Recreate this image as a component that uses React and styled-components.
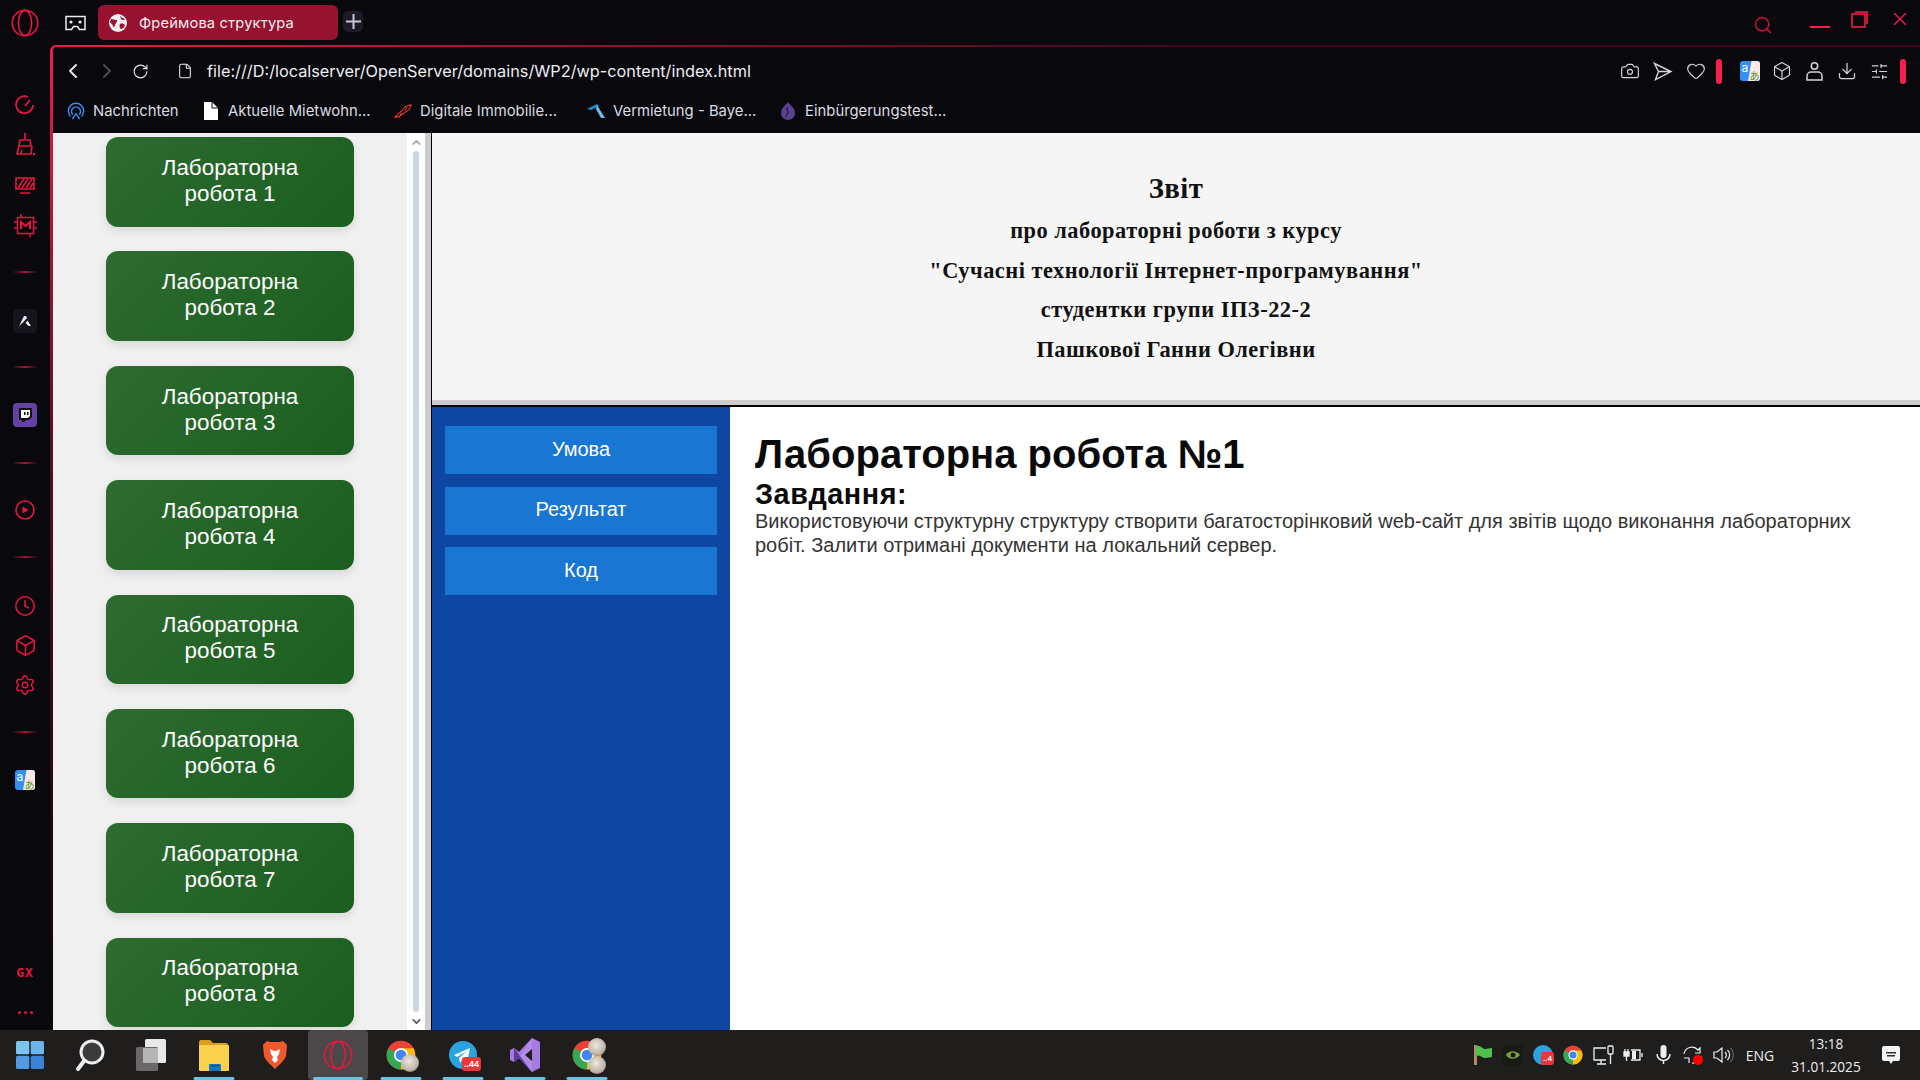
import React from 'react';
import styled, { createGlobalStyle } from 'styled-components';
import { Camera, Heart, Box, Download, SlidersHorizontal, ChevronLeft, ChevronRight, RotateCw, File, Search, X, Clock, Settings, ChevronUp, ChevronDown } from 'lucide-react';

const Global = createGlobalStyle`
  html, body { margin: 0; padding: 0; background: #08080d; }
  #root { width: 1920px; height: 1080px; }
  * { box-sizing: border-box; }
`;
const Screen = styled.div`width:1920px;height:1080px;display:flex;flex-direction:column;overflow:hidden;background:#08080d;`;
const Top = styled.div`height:45px;flex:none;display:flex;align-items:flex-start;position:relative;`;
const LogoSlot = styled.div`width:50px;height:45px;display:flex;align-items:center;justify-content:center;`;
const GameSlot = styled.div`width:48px;height:45px;padding-left:3px;display:flex;align-items:center;justify-content:center;`;
const Tab = styled.div`margin-top:5px;width:240px;height:35px;background:#96122f;border-radius:6px;display:flex;align-items:center;padding-left:11px;gap:12px;color:#eee;font:14.7px Inter,sans-serif;letter-spacing:.15px;`;
const NewTab = styled.div`margin:11px 0 0 5px;width:20px;height:21px;border-radius:5px;background:#1c1c28;display:flex;align-items:center;justify-content:center;`;
const TopRight = styled.div`margin-left:auto;height:45px;display:flex;align-items:center;color:#fa1e4e;`;
const WinBtn = styled.div`width:${p=>p.$w}px;margin-top:${p=>p.$mt||0}px;display:flex;justify-content:center;align-items:center;`;
const Body = styled.div`flex:1;min-height:0;display:flex;`;
const Rail = styled.div`width:50px;flex:none;display:flex;flex-direction:column;align-items:center;padding:40px 0 0;color:#e8163f;`;
const RailItem = styled.div`height:${p=>p.$h||40}px;flex:none;display:flex;align-items:center;justify-content:center;margin-top:${p=>p.$mt||0}px;`;
const Sep = styled.div`width:26px;height:2px;flex:none;margin-top:${p=>p.$mt}px;background:linear-gradient(90deg,transparent,#a8143a,transparent);`;
const Spacer = styled.div`flex:1;`;
const GxText = styled.div`font:bold 13px "DejaVu Sans Mono",monospace;color:#e8163f;letter-spacing:1px;`;
const Dots = styled.div`display:flex;gap:3px;`;
const Dot = styled.span`width:3px;height:3px;border-radius:50%;background:#e8163f;`;
const Panel = styled.div`flex:1;min-width:0;display:flex;flex-direction:column;margin-left:0;border-top:2px solid transparent;border-left:3px solid transparent;border-top-left-radius:6px;
  background:linear-gradient(#08080d,#08080d) padding-box,linear-gradient(90deg,#f01c4a 0%,#9d1534 25%,#3d0c1c 60%,#3d0c1c 100%) border-box;position:relative;`;
const PanelEdge = styled.div`position:absolute;left:-3px;top:4px;bottom:0;width:3px;background:linear-gradient(#f01c4a,#5a0f22 40%,#220810 80%,#08080d);`;
const Toolbar = styled.div`height:47px;flex:none;display:flex;align-items:center;padding-top:1px;`;
const NavBtn = styled.div`width:${p=>p.$w||33}px;padding-left:${p=>p.$pl||0}px;display:flex;justify-content:center;color:${p=>p.$dim?'#4a4a50':'#e6e6ea'};`;
const Url = styled.div`color:#eeeef2;font:16.3px Inter,sans-serif;white-space:nowrap;`;
const Tools = styled.div`margin-left:auto;display:flex;align-items:center;color:#d4d4da;padding-right:10px;`;
const ToolSlot = styled.div`width:${p=>p.$w||33}px;margin-left:${p=>p.$ml||0}px;display:flex;justify-content:center;align-items:center;`;
const RedBar = styled.div`width:6px;height:25px;border-radius:3px;background:#fa1e4e;`;
const Bookmarks = styled.div`height:39px;flex:none;display:flex;align-items:center;padding:0 0 6px 14px;`;
const Bookmark = styled.div`width:${p=>p.$w}px;display:flex;align-items:center;gap:8px;color:#dcdce2;font:14.85px Inter,sans-serif;white-space:nowrap;`;
const BmIcon = styled.span`width:18px;height:18px;flex:none;display:flex;align-items:center;justify-content:center;`;
const Frames = styled.div`flex:1;min-height:0;display:flex;`;
const LeftFrame = styled.div`width:372px;flex:none;display:flex;background:#f0f0f0;overflow:hidden;`;
const LabList = styled.div`flex:1;display:flex;flex-direction:column;align-items:center;padding-top:4px;gap:24.9px;`;
const LabButton = styled.div`width:248px;height:89.5px;flex:none;border-radius:12px;background:linear-gradient(135deg,#2e6b30,#1b5e20);box-shadow:0 4px 10px rgba(0,0,0,.1);color:#fff;
  display:flex;align-items:center;justify-content:center;text-align:center;font:22.4px/26px "Liberation Sans",sans-serif;padding-bottom:2px;`;
const Scroll = styled.div`width:18px;flex:none;background:#fff;display:flex;flex-direction:column;align-items:center;color:#6a6a6a;`;
const Arrow = styled.div`height:18px;flex:none;display:flex;align-items:center;justify-content:center;`;
const Thumb = styled.div`width:6px;flex:1;background:#cdd7e1;border-radius:3px;`;
const VDivider = styled.div`width:7px;flex:none;background:#ccc;border-right:1px solid #000;`;
const RightFrames = styled.div`flex:1;min-width:0;display:flex;flex-direction:column;`;
const Header = styled.header`height:267px;flex:none;background:#f5f5f5;display:flex;flex-direction:column;align-items:center;padding-top:33px;font-family:"Liberation Serif",serif;font-weight:bold;color:#111;`;
const Title = styled.div`font-size:28.8px;line-height:45px;letter-spacing:.4px;`;
const SubLine = styled.div`font-size:22.4px;line-height:39.7px;letter-spacing:.5px;`;
const HDivider = styled.div`height:7px;flex:none;background:#ccc;border-bottom:2px solid #000;`;
const Lower = styled.div`flex:1;min-height:0;display:flex;background:#fff;`;
const Side = styled.nav`width:298px;flex:none;background:#0d47a1;padding:19px 13px 0;display:flex;flex-direction:column;gap:12.5px;`;
const SideBtn = styled.div`height:48px;flex:none;background:#1976d2;color:#fff;display:flex;align-items:center;justify-content:center;font:20px "Liberation Sans",sans-serif;padding-bottom:2px;`;
const Content = styled.main`flex:1;padding:24px 25px 0;color:#111;font-family:"Liberation Sans",sans-serif;`;
const H1 = styled.h1`margin:0;font-size:40px;line-height:47px;color:#0a0a0a;`;
const H2 = styled.h2`margin:0;font-size:28.8px;line-height:32px;letter-spacing:.55px;color:#0a0a0a;`;
const P = styled.p`margin:0;font-size:20px;line-height:23.5px;color:#333;`;
const Taskbar = styled.div`height:50px;flex:none;background:#201d1d;display:flex;align-items:stretch;color:#fff;`;
const AppSlot = styled.div`width:${p=>p.$w||61}px;margin-right:${p=>p.$mr||0}px;padding-right:${p=>p.$pr||0}px;position:relative;display:flex;align-items:center;justify-content:center;background:${p=>p.$on?'#4a4848':'transparent'};border-radius:4px;`;
const Underline = styled.span`position:absolute;bottom:0;left:50%;transform:translateX(-50%);width:${p=>p.$w||41}px;height:3px;background:#66c3ea;border-radius:2px;`;
const Tray = styled.div`margin-left:auto;display:flex;align-items:center;padding-right:14px;`;
const TrayIcon = styled.div`width:30px;display:flex;justify-content:center;align-items:center;`;
const Eng = styled.div`font:14px "Open Sans",sans-serif;color:#eee;width:44px;text-align:center;`;
const Clocks = styled.div`width:88px;margin:0 6px 0 0;text-align:center;font:13.6px/23px "Open Sans",sans-serif;color:#eee;`;

const OperaLogo = ({s=28,c='#e8163f',w=1.6}) => (
  <svg width={s} height={s} viewBox="0 0 28 28" fill="none" stroke={c} strokeWidth={w}><circle cx="14" cy="14" r="12.8"/><ellipse cx="14" cy="14" rx="6.6" ry="12.6"/></svg>
);
const Translate = ({s=20}) => (
  <svg width={s} height={s} viewBox="0 0 20 20"><rect width="20" height="20" rx="3" fill="#3390f5"/><path d="M11.5 0H17a3 3 0 0 1 3 3v14a3 3 0 0 1-3 3H8z" fill="#fde8e4"/><text x="1.500" y="10.500" fontSize="12" fontFamily="Inter,sans-serif" fill="#fff">a</text><text x="9.500" y="18.500" fontSize="10" fontFamily="'Noto Sans CJK JP',sans-serif" fill="#4b9a32">あ</text></svg>
);
const Chrome = ({s=24}) => (
  <svg width={s} height={s} viewBox="0 0 24 24"><circle cx="12" cy="12" r="11.5" fill="#ea4335"/><path d="M12 12 1.9 6.5A11.5 11.5 0 0 0 12 23.5z" fill="#34a853"/><path d="M12 12V23.5A11.5 11.5 0 0 0 22 6.5H12z" fill="#fbbc05"/><circle cx="12" cy="12" r="5.6" fill="#fff"/><circle cx="12" cy="12" r="4.3" fill="#4285f4"/></svg>
);
const Fluffy = styled.span`position:absolute;right:${p=>p.$r}px;bottom:${p=>p.$b}px;width:18px;height:18px;border-radius:50%;background:radial-gradient(circle at 45% 40%,#efe9de,#bdb5a8 60%,#4a4640);`;
const Rel = styled.span`position:relative;display:flex;`;
const TgBadge = styled.span`position:absolute;right:${p=>p.$small?-1:-4}px;bottom:${p=>p.$small?0:-2}px;background:#e8373a;color:#fff;font:bold ${p=>p.$small?8:9}px "Liberation Sans",sans-serif;padding:2px 2px;border-radius:3px;`;

const labs = [1,2,3,4,5,6,7,8];

export default function App(){
  return (
    <Screen>
      <Global/>
      <Top>
        <LogoSlot><OperaLogo/></LogoSlot>
        <GameSlot>
          <svg width="21" height="16" viewBox="0 0 21 16" fill="none" stroke="#eee" strokeWidth="1.5"><path d="M1 1.5h19v13h-5.5l-2-3h-4l-2 3H1z"/><circle cx="6" cy="7" r="1.6" fill="#eee" stroke="none"/><circle cx="15" cy="7" r="1.6" fill="#eee" stroke="none"/></svg>
        </GameSlot>
        <Tab>
          <svg width="18" height="18" viewBox="0 0 18 18"><circle cx="9" cy="9" r="9" fill="#eee"/><path d="M2 5c2 0 3 1 5 1s1 2 0 3-1 3-2 4-1-2-2-3-2-1-2-2zM11 2c2 1 1 2 3 2l2 2c-2 0-3 0-4-1zM11 10c2-1 4 0 5 1-1 3-3 4-4 4s-2-3-1-5z" fill="#96122f"/></svg>
          Фреймова структура
        </Tab>
        <NewTab>
          <svg width="15" height="15" viewBox="0 0 15 15" stroke="#c8c8d2" strokeWidth="2"><path d="M7.5 0v15M0 7.5h15"/></svg>
        </NewTab>
        <TopRight>
          <WinBtn $w={78} $mt={4}><Search size={20} color="#c8143c" strokeWidth={1.8}/></WinBtn>
          <WinBtn $w={36} $mt={9}><svg width="20" height="4" viewBox="0 0 20 4"><rect y="1" width="20" height="2" fill="#fa1e4e"/></svg></WinBtn>
          <WinBtn $w={42} $mt={-7}><svg width="17" height="17" viewBox="0 0 17 17" fill="none" stroke="#fa1e4e" strokeWidth="1.5"><rect x="1" y="3" width="13" height="13"/><path d="M4 1h12v12"/></svg></WinBtn>
          <WinBtn $w={40} $mt={-7}><X size={22} color="#fa1e4e" strokeWidth={1.4}/></WinBtn>
        </TopRight>
      </Top>
      <Body>
        <Rail>
          <RailItem>
            <svg width="22" height="22" viewBox="0 0 22 22" fill="none" stroke="#e8163f" strokeWidth="1.8"><path d="M19 11a8.5 8.5 0 1 1-5-8M11 12l5-6"/></svg>
          </RailItem>
          <RailItem>
            <svg width="22" height="24" viewBox="0 0 22 24" fill="none" stroke="#e8163f" strokeWidth="1.7"><path d="M11 0v6M6 7h10l1 6H5zM5 13l-2 8h14l1-8M8 17l-1 4"/><circle cx="20" cy="21" r="1.3" fill="#e8163f" stroke="none"/></svg>
          </RailItem>
          <RailItem>
            <svg width="20" height="17" viewBox="0 0 20 17" fill="none" stroke="#e8163f" strokeWidth="1.6"><rect x="1" y="1" width="18" height="11"/><path d="M5 16h10M3 11l6-9M7 11l6-9M11 11l6-9M15 11l3-5"/></svg>
          </RailItem>
          <RailItem>
            <svg width="23" height="23" viewBox="0 0 23 23" fill="none" stroke="#e8163f" strokeWidth="1.5"><rect x="3.5" y="3.5" width="16" height="16"/><path d="M7 15V8l4.500 4L16 8v7" strokeWidth="2"/><path d="M7 0v3M16 20v3M0 8h3M0 14h3M20 8h3M20 14h3"/></svg>
          </RailItem>
          <Sep $mt={26}/>
          <RailItem $h={24} $mt={36}>
            <svg width="24" height="24" viewBox="0 0 24 24"><rect width="24" height="24" rx="4" fill="#14141c"/><path d="M6 17l5-10h2l1 2-3.500 4zM12.500 14l2-2.500L18 17h-2.500z" fill="#e6e6e6"/></svg>
          </RailItem>
          <Sep $mt={33}/>
          <RailItem $h={24} $mt={35}>
            <svg width="24" height="24" viewBox="0 0 24 24"><rect width="24" height="24" rx="4" fill="#6441a5"/><path d="M6 5h13v9l-3 3h-3l-2 2H9v-2H6z" fill="#111"/><path d="M8 7h9v6l-2 2H8z" fill="#fff"/><path d="M11 9h1.500v3H11zM14 9h1.500v3H14z" fill="#111"/></svg>
          </RailItem>
          <Sep $mt={35}/>
          <RailItem $mt={26}>
            <svg width="20" height="20" viewBox="0 0 20 20" fill="none" stroke="#e8163f" strokeWidth="1.6"><circle cx="10" cy="10" r="9"/><path d="M7.500 6.500l6 3.500-6 3.500z" fill="#e8163f" stroke="none"/></svg>
          </RailItem>
          <Sep $mt={26}/>
          <RailItem $mt={28}><Clock size={22} strokeWidth={1.7}/></RailItem>
          <RailItem $h={38}><Box size={23} strokeWidth={1.6}/></RailItem>
          <RailItem $h={42}><Settings size={22} strokeWidth={1.6}/></RailItem>
          <Sep $mt={25}/>
          <RailItem $mt={27}><Translate/></RailItem>
          <Spacer/>
          <RailItem $h={20}><GxText>GX</GxText></RailItem>
          <RailItem $h={20} $mt={20}><Dots><Dot/><Dot/><Dot/></Dots></RailItem>
          <RailItem $h={8}/>
        </Rail>
        <Panel>
          <PanelEdge/>
          <Toolbar>
            <NavBtn $w={40}><ChevronLeft size={24} strokeWidth={2}/></NavBtn>
            <NavBtn $dim $w={28}><ChevronRight size={24} strokeWidth={2}/></NavBtn>
            <NavBtn $w={38}><RotateCw size={17} strokeWidth={1.6}/></NavBtn>
            <NavBtn $w={48} $pl={3}><File size={16} strokeWidth={1.6}/></NavBtn>
            <Url>file:///D:/localserver/OpenServer/domains/WP2/wp-content/index.html</Url>
            <Tools>
              <ToolSlot><Camera size={20} strokeWidth={1.4}/></ToolSlot>
              <ToolSlot><svg width="20" height="19" viewBox="0 0 20 19" fill="none" stroke="#d4d4da" strokeWidth="1.4"><path d="M1.500 1.500 18 9.500 2.500 17.500 5.500 9.500zM5.500 9.500H18"/></svg></ToolSlot>
              <ToolSlot><Heart size={20} strokeWidth={1.4}/></ToolSlot>
              <ToolSlot $w={14}><RedBar/></ToolSlot>
              <ToolSlot $w={32} $ml={8}><Translate/></ToolSlot>
              <ToolSlot $w={32}><Box size={20} strokeWidth={1.4}/></ToolSlot>
              <ToolSlot><svg width="17" height="19" viewBox="0 0 17 19" fill="none" stroke="#d4d4da" strokeWidth="1.5"><circle cx="8.500" cy="4" r="3.200"/><path d="M1 18v-4a4 4 0 0 1 4-4h7a4 4 0 0 1 4 4v4z"/></svg></ToolSlot>
              <ToolSlot $w={32}><Download size={20} strokeWidth={1.5}/></ToolSlot>
              <ToolSlot><SlidersHorizontal size={19} strokeWidth={1.5}/></ToolSlot>
              <ToolSlot $w={14}><RedBar/></ToolSlot>
            </Tools>
          </Toolbar>
          <Bookmarks>
            <Bookmark $w={135}><BmIcon>
              <svg width="20" height="20" viewBox="0 0 20 20" fill="none" stroke="#3d8bf0" strokeWidth="1.6"><path d="M4 16a8.500 8.500 0 1 1 12 0"/><path d="M6.500 14a5 5 0 1 1 7 0"/><path d="M6 19l4-6 4 6" /></svg>
            </BmIcon>Nachrichten</Bookmark>
            <Bookmark $w={192}><BmIcon>
              <svg width="14" height="18" viewBox="0 0 14 18"><path d="M0 0h8l6 6v12H0z" fill="#fff"/><path d="M8 0v6h6" fill="none" stroke="#08080d"/></svg>
            </BmIcon>Aktuelle Mietwohn...</Bookmark>
            <Bookmark $w={193}><BmIcon>
              <svg width="20" height="16" viewBox="0 0 20 16" fill="none" stroke="#e8362f" strokeWidth="1.2"><path d="M1 15C5 10 8 9 10 6c1-2 4-4 9-5-1 4-3 7-6 8s-5 6-12 6zM6 15l2-5M12 8l2-4"/></svg>
            </BmIcon>Digitale Immobilie...</Bookmark>
            <Bookmark $w={192}><BmIcon>
              <svg width="18" height="14" viewBox="0 0 18 14"><path d="M0 5l10-5 2 2-8 4z" fill="#1c8fd0"/><path d="M10 1l8 13h-4L9 5z" fill="#67c0ea"/></svg>
            </BmIcon>Vermietung - Baye...</Bookmark>
            <Bookmark $w={180}><BmIcon>
              <svg width="18" height="18" viewBox="0 0 18 18"><path d="M9 0c2 3 7 6 7 11a7 7 0 0 1-14 0c0-5 5-8 7-11z" fill="#5b3f91"/><path d="M9 5c-3 2 1 4 0 6s-2 2-2 4" stroke="#08080d" fill="none"/></svg>
            </BmIcon>Einbürgerungstest...</Bookmark>
          </Bookmarks>
          <Frames>
            <LeftFrame>
              <LabList>
                {labs.map(n => <LabButton key={n}>Лабораторна<br/>робота {n}</LabButton>)}
              </LabList>
              <Scroll>
                <Arrow><ChevronUp size={13} strokeWidth={3} color="#aaa"/></Arrow>
                <Thumb/>
                <Arrow><ChevronDown size={13} strokeWidth={3} color="#555"/></Arrow>
              </Scroll>
            </LeftFrame>
            <VDivider/>
            <RightFrames>
              <Header>
                <Title>Звіт</Title>
                <SubLine>про лабораторні роботи з курсу</SubLine>
                <SubLine>"Сучасні технології Інтернет-програмування"</SubLine>
                <SubLine>студентки групи ІПЗ-22-2</SubLine>
                <SubLine>Пашкової Ганни Олегівни</SubLine>
              </Header>
              <HDivider/>
              <Lower>
                <Side>
                  <SideBtn>Умова</SideBtn>
                  <SideBtn>Результат</SideBtn>
                  <SideBtn>Код</SideBtn>
                </Side>
                <Content>
                  <H1>Лабораторна робота №1</H1>
                  <H2>Завдання:</H2>
                  <P>Використовуючи структурну структуру створити багатосторінковий web-сайт для звітів щодо виконання лабораторних робіт. Залити отримані документи на локальний сервер.</P>
                </Content>
              </Lower>
            </RightFrames>
          </Frames>
        </Panel>
      </Body>
      <Taskbar>
        <AppSlot $w={59}>
          <svg width="28" height="28" viewBox="0 0 28 28"><rect width="13.300" height="13.300" rx="1.500" fill="#7cc4f0"/><rect x="14.700" width="13.300" height="13.300" rx="1.500" fill="#6db4ea"/><rect y="14.700" width="13.300" height="13.300" rx="1.500" fill="#4f9ae2"/><rect x="14.700" y="14.700" width="13.300" height="13.300" rx="1.500" fill="#3b82d8"/></svg>
        </AppSlot>
        <AppSlot>
          <svg width="30" height="34" viewBox="0 0 30 34" fill="none"><circle cx="17" cy="14" r="11" fill="#3d3a3a" stroke="#eee" strokeWidth="3"/><path d="M9 23l-6 8" stroke="#eee" strokeWidth="4" strokeLinecap="round"/></svg>
        </AppSlot>
        <AppSlot>
          <svg width="30" height="34" viewBox="0 0 30 34"><rect x="9" y="1" width="21" height="24" rx="1.500" fill="#e8e8e8"/><rect x="0" y="9" width="22" height="24" rx="1.500" fill="#6a6868"/><rect x="7" y="10" width="15" height="15" fill="#b5b5b5"/></svg>
        </AppSlot>
        <AppSlot $w={66}>
          <svg width="30" height="32" viewBox="0 0 30 32"><path d="M0 3a2 2 0 0 1 2-2h9l3 3h13a2 2 0 0 1 2 2v4H0z" fill="#d9a01e"/><rect y="6" width="30" height="26" rx="1" fill="#fbd04a"/><rect x="10" y="25" width="12" height="7" fill="#1379c6" rx="1"/><rect x="12" y="26" width="8" height="1.500" fill="#0c4f86"/></svg>
          <Underline/>
        </AppSlot>
        <AppSlot $pr={5}>
          <svg width="26" height="30" viewBox="0 0 26 30"><path d="M5 1l3 1h10l3-1 4 4-1 11c-1 4-7 9-11 13C9 25 3 20 2 16L1 5z" fill="#f0592b"/><path d="M8 9l4 2h2l4-2-1 5-2 3 1 3-3 3-3-3 1-3-2-3z" fill="#fff"/></svg>
        </AppSlot>
        <AppSlot $on $w={60} $mr={2}>
          <OperaLogo s={30} w={1.5}/>
          <Underline $w={50}/>
        </AppSlot>
        <AppSlot $w={62}>
          <Rel><Chrome s={30}/><Fluffy $r={-3} $b={-2}/></Rel>
          <Underline/>
        </AppSlot>
        <AppSlot $w={62}>
          <Rel>
            <svg width="28" height="28" viewBox="0 0 28 28"><circle cx="14" cy="14" r="14" fill="#2aa3de"/><path d="M5 14l16-7-3 15-5-3-2 3-1-5 8-7-10 6z" fill="#fff"/></svg>
            <TgBadge>..44</TgBadge>
          </Rel>
          <Underline/>
        </AppSlot>
        <AppSlot>
          <svg width="30" height="36" viewBox="0 0 30 36"><path d="M22 1l8 4v26l-8 4-13-14-5 4-4-2V13l4-2 5 4z" fill="#a67be0"/><path d="M22 1v34L9 21z" fill="#b892ea" opacity=".7"/><path d="M4 11l18 24-13-14-5 4z" fill="#5b3b9a"/><path d="M22 12l-7 6 7 6z" fill="#201d1d"/></svg>
          <Underline/>
        </AppSlot>
        <AppSlot $w={63}>
          <Rel><Chrome s={30}/><Fluffy $r={-4} $b={14}/><Fluffy $r={-4} $b={-4}/></Rel>
          <Underline/>
        </AppSlot>
        <Tray>
          <TrayIcon><svg width="20" height="20" viewBox="0 0 20 20"><path d="M1 0h3v20H1z" fill="#b08a60"/><path d="M3 1c5-1 6 3 9 3l7-1v9l-7 1c-3 0-5-4-9-2z" fill="#4fc04f"/></svg></TrayIcon>
          <TrayIcon><svg width="20" height="20" viewBox="0 0 20 20"><rect width="20" height="20" fill="#181a14"/><path d="M3 10c3-5 10-5 14 0-4 5-11 5-14 0z" fill="#76a33a"/><circle cx="10" cy="10" r="2.500" fill="#181a14"/></svg></TrayIcon>
          <TrayIcon><Rel><svg width="20" height="20" viewBox="0 0 20 20"><circle cx="10" cy="10" r="10" fill="#2aa3de"/></svg><TgBadge $small>..4</TgBadge></Rel></TrayIcon>
          <TrayIcon><Chrome s={20}/></TrayIcon>
          <TrayIcon><svg width="21" height="20" viewBox="0 0 21 20" fill="none" stroke="#eee" strokeWidth="1.300"><path d="M13 3H1v12h12M4 19h9M8 15v4"/><rect x="15" y="1" width="5" height="8" rx="1"/><path d="M17.500 9v10"/></svg></TrayIcon>
          <TrayIcon><svg width="21" height="16" viewBox="0 0 21 16" fill="none" stroke="#eee" strokeWidth="1.300"><path d="M8 3h9v10H8M19 6v4"/><path d="M1 5h5v4H1zM2 2v3M5 2v3M3.500 9v5" fill="#eee"/><path d="M9 4h4v8H9z" fill="#eee" stroke="none"/></svg></TrayIcon>
          <TrayIcon><svg width="15" height="20" viewBox="0 0 15 20" fill="none"><rect x="4.500" y="0" width="6" height="13" rx="3" fill="#eee"/><path d="M1 9a6.500 6.500 0 0 0 13 0M7.500 16v3" stroke="#eee" strokeWidth="1.500"/></svg></TrayIcon>
          <TrayIcon><svg width="20" height="20" viewBox="0 0 20 20" fill="none" stroke="#eee" strokeWidth="1.200"><path d="M1 9a8 8 0 0 1 14-4l2-2v5h-5M18 11a8 8 0 0 1-9 7M1 13h5v5"/><circle cx="15" cy="15" r="5" fill="#f00" stroke="none"/></svg></TrayIcon>
          <TrayIcon><svg width="21" height="16" viewBox="0 0 21 16" fill="none" stroke="#eee" strokeWidth="1.200"><path d="M1 5h3l5-4v14l-5-4H1zM12 5a4 4 0 0 1 0 6M14.500 3a7 7 0 0 1 0 10"/><path d="M17.500 1a10 10 0 0 1 0 14" stroke="#666"/></svg></TrayIcon>
          <Eng>ENG</Eng>
          <Clocks>13:18<br/>31.01.2025</Clocks>
          <TrayIcon><svg width="18" height="18" viewBox="0 0 18 18"><path d="M2 0h14a2 2 0 0 1 2 2v11a2 2 0 0 1-2 2h-5l-2 3-2-3H2a2 2 0 0 1-2-2V2a2 2 0 0 1 2-2z" fill="#f4f4f4"/><path d="M4 6h10v1.400H4zM5 9h8v1.400H5z" fill="#333"/></svg></TrayIcon>
        </Tray>
      </Taskbar>
    </Screen>
  );
}
